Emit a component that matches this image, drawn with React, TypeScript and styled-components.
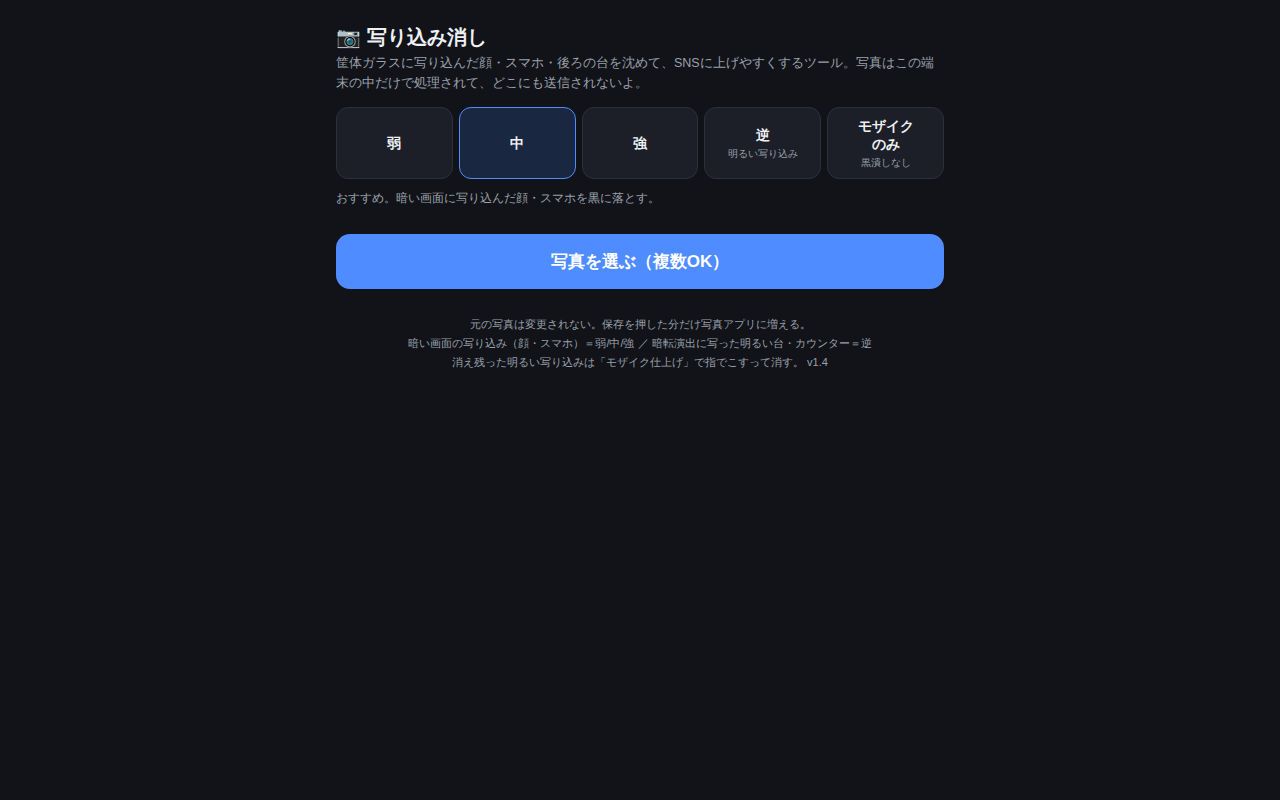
import React, { useState } from "react";
import styled, { createGlobalStyle } from "styled-components";

const GlobalStyle = createGlobalStyle`
  * { box-sizing: border-box; }
  body {
    margin: 0;
    background: #111318;
    color: #eef0f4;
    font-family: "Liberation Sans", sans-serif;
  }
`;

const Page = styled.main`
  max-width: 640px;
  margin: 0 auto;
  padding: 24px 16px;
`;

const Title = styled.h1`
  margin: 0 0 2px;
  font-size: 20px;
  line-height: 27px;
`;

const Lead = styled.p`
  margin: 0 0 14px;
  font-size: 12.5px;
  line-height: 20px;
  color: #9aa0ac;
`;

const ModeRow = styled.div`
  display: flex;
  gap: 6px;
`;

const ModeButton = styled.button<{ $active: boolean }>`
  flex: 1 1 0;
  min-width: 0;
  height: 72px;
  padding: 0 4px;
  border: 1px solid ${(p) => (p.$active ? "#4f8cff" : "#2c303a")};
  border-radius: 12px;
  background: ${(p) => (p.$active ? "#1a2740" : "#1c1f27")};
  color: #eef0f4;
  font-family: inherit;
  font-size: 14px;
  font-weight: 700;
  line-height: 18px;
  white-space: pre-line;
`;

const ModeNote = styled.small`
  display: block;
  margin-top: 4px;
  font-size: 10px;
  font-weight: 400;
  line-height: 12px;
  color: #9aa0ac;
`;

const Hint = styled.p`
  margin: 10px 0 26px;
  font-size: 12px;
  line-height: 19px;
  color: #9aa0ac;
`;

const PickButton = styled.button`
  display: block;
  width: 100%;
  height: 55px;
  border: 0;
  border-radius: 14px;
  background: #4f8cff;
  color: #fff;
  font-family: inherit;
  font-size: 17px;
  font-weight: 700;
`;

const Footer = styled.footer`
  margin-top: 26px;
  text-align: center;
  font-size: 11px;
  line-height: 19px;
  color: #9aa0ac;
`;

const modes = [
  { label: "弱" },
  { label: "中" },
  { label: "強" },
  { label: "逆", note: "明るい写り込み" },
  { label: "モザイク\nのみ", note: "黒潰しなし" },
];

export default function App() {
  const [active, setActive] = useState(1);
  return (
    <Page lang="ja">
      <GlobalStyle />
      <Title>📷 写り込み消し</Title>
      <Lead>
        筐体ガラスに写り込んだ顔・スマホ・後ろの台を沈めて、SNSに上げやすくするツール。写真はこの端末の中だけで処理されて、どこにも送信されないよ。
      </Lead>
      <ModeRow>
        {modes.map((m, i) => (
          <ModeButton key={m.label} $active={i === active} onClick={() => setActive(i)}>
            {m.label}
            {m.note && <ModeNote>{m.note}</ModeNote>}
          </ModeButton>
        ))}
      </ModeRow>
      <Hint>おすすめ。暗い画面に写り込んだ顔・スマホを黒に落とす。</Hint>
      <PickButton>写真を選ぶ（複数OK）</PickButton>
      <Footer>
        元の写真は変更されない。保存を押した分だけ写真アプリに増える。
        <br />
        暗い画面の写り込み（顔・スマホ）＝弱/中/強 ／ 暗転演出に写った明るい台・カウンター＝逆
        <br />
        消え残った明るい写り込みは「モザイク仕上げ」で指でこすって消す。 v1.4
      </Footer>
    </Page>
  );
}
